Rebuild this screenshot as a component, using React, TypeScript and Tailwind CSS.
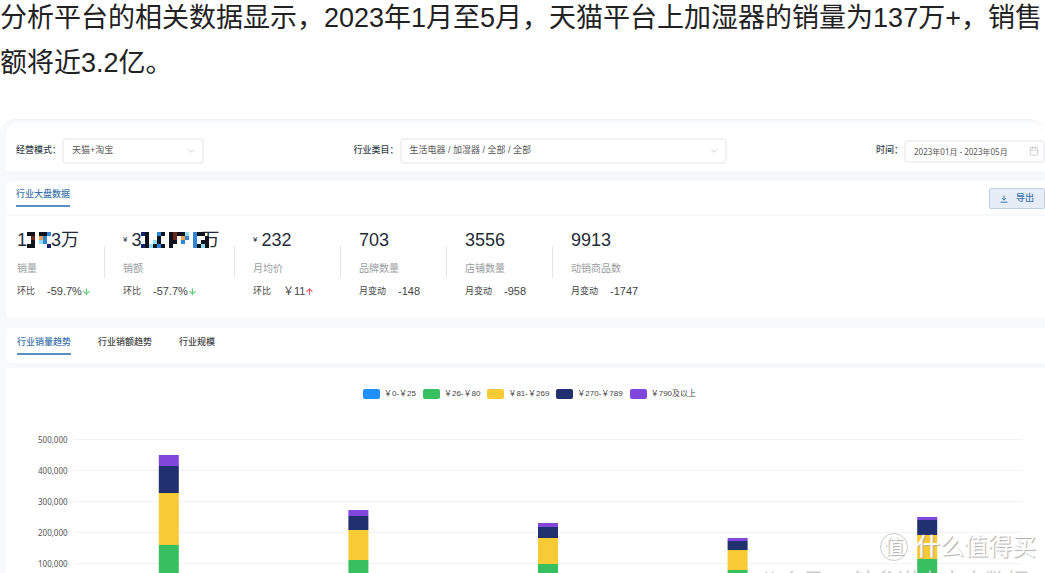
import { ArrowDown, ArrowUp, Calendar, ChevronDown } from "lucide-react";

const priceBands = [
    { label: "￥0-￥25", color: "#1e90ff" },
    { label: "￥26-￥80", color: "#38c060" },
    { label: "￥81-￥269", color: "#f8ca34" },
    { label: "￥270-￥789", color: "#21316f" },
    { label: "￥790及以上", color: "#8146dc" },
];

// cumulative sales per month in thousands: green, yellow, navy, purple
const months = [
    [158, 326, 413, 448],
    [110, 206, 252, 271],
    [97, 181, 216, 229],
    [77, 142, 171, 181],
    [113, 190, 239, 247],
];

const ticks = [500, 400, 300, 200, 100];
const ROW = 31;

const cellColors: Record<string, string> = {
    k: "#10131c",
    n: "#15206b",
    b: "#2f86d6",
    c: "#8fdcf7",
    m: "#6b2a1c",
    o: "#f0a04a",
};

function Mosaic({ rows, className }: { rows: string[]; className?: string }) {
    const cols = rows[0].length;
    return (
        <svg width={cols * 4} height={rows.length * 4} className={className} aria-hidden="true">
            {rows.map((row, y) =>
                row.split("").map((cell, x) =>
                    cell === "." ? null : <rect key={`${x}-${y}`} x={x * 4} y={y * 4} width="4" height="4" fill={cellColors[cell]} />
                )
            )}
        </svg>
    );
}

interface StatProps {
    label: string;
    compare: string;
    change: string;
    trend?: "up" | "down";
    wide?: boolean;
    last?: boolean;
    children: React.ReactNode;
}

function Stat({ label, compare, change, trend, wide, last, children }: StatProps) {
    return (
        <div className="flex">
            <div className={wide ? "w-[111px]" : "w-[87px]"}>
                <div className="flex items-center h-6 text-lg leading-6 whitespace-nowrap text-[#1f2c38]">{children}</div>
                <div className="mt-[7px] text-[10px] leading-5 text-[#9a9da1]">{label}</div>
                <div className="mt-1 flex items-center text-[9px] leading-4 whitespace-nowrap text-[#444]">
                    <span className="mr-3">{compare}</span>
                    <span className="text-[11px]">{change}</span>
                    {trend === "down" && <ArrowDown size={9} strokeWidth={3} className="text-[#5fcf7c]" />}
                    {trend === "up" && <ArrowUp size={9} strokeWidth={3} className="text-[#f0606c]" />}
                </div>
            </div>
            {!last && <div className="w-px h-8 mt-[18px] mr-[18px] bg-[#e4e5e7]" />}
        </div>
    );
}

function SelectField({ id, label, value, width }: { id: string; label: string; value: string; width: string }) {
    return (
        <div className="flex items-center">
            <label htmlFor={id} className="mr-1 w-[42px] whitespace-nowrap font-medium text-[#333f4a]">{label}</label>
            <div className={`relative ${width}`}>
                <select id={id} className="appearance-none w-full h-[26px] pl-2 pr-6 border-2 border-[#f0f1f4] rounded-sm bg-white text-[#555]">
                    <option>{value}</option>
                </select>
                <ChevronDown size={10} strokeWidth={2} className="absolute right-2 top-2 text-[#c4c7cd] pointer-events-none" />
            </div>
        </div>
    );
}

function Chart() {
    return (
        <section className="flex-1 bg-white pt-5">
            <ul className="flex justify-center gap-[7px] pl-2 text-[8px] leading-3 text-[#444]">
                {priceBands.map((band) => (
                    <li key={band.label} className="flex items-center gap-1 whitespace-nowrap">
                        <span className="w-[17px] h-[10px] rounded-[2px]" style={{ backgroundColor: band.color }} />
                        {band.label}
                    </li>
                ))}
            </ul>
            <div className="flex mt-6 pl-8 pr-[23px]">
                <div className="w-9 shrink-0 text-[8px] text-[#555] font-['Noto_Sans',sans-serif]">
                    {ticks.map((t) => (
                        <div key={t} className="h-[31px] leading-[31px]">{`${t},000`}</div>
                    ))}
                </div>
                <svg className="flex-1 h-[186px]" role="img" aria-label="行业销量趋势">
                    {ticks.map((t, i) => (
                        <line key={t} x1="0" x2="100%" y1={i * ROW + 15.5} y2={i * ROW + 15.5} stroke="#f3f3f5" />
                    ))}
                    {months.map((values, m) => (
                        <svg key={m} x={`${m * 20 + 10}%`} overflow="visible">
                            {values.map((v, i) => {
                                const bottom = Math.round(170 - ((i ? values[i - 1] : 0) * ROW) / 100);
                                const top = Math.round(170 - (v * ROW) / 100);
                                return <rect key={i} x="-10" width="20" y={top} height={bottom - top} fill={priceBands[i + 1].color} />;
                            })}
                        </svg>
                    ))}
                </svg>
            </div>
        </section>
    );
}

function App() {
    return (
        <div className="relative flex flex-col h-screen overflow-hidden bg-white font-['Liberation_Sans','Noto_Sans_CJK_SC',sans-serif]">
            <p className="-mt-1 mb-[33px] text-[27px] leading-[45px] text-[#222]">
                分析平台的相关数据显示，2023年1月至5月，天猫平台上加湿器的销量为137万+，销售额将近3.2亿。
            </p>

            <main className="flex flex-col flex-1 pl-[6px] pt-[3px] rounded-t-2xl bg-[#f7f9fb] border-t border-[#f0f1f3]">
                <form className="flex items-center justify-between h-12 pl-[10px] pt-3 pb-1 rounded-t-xl bg-white text-[9px]">
                    <SelectField id="mode" label="经营模式：" value="天猫+淘宝" width="w-[142px]" />
                    <SelectField id="category" label="行业类目：" value="生活电器 / 加湿器 / 全部 / 全部" width="w-[327px]" />
                    <div className="flex items-center">
                        <label htmlFor="period" className="mr-1 w-6 whitespace-nowrap font-medium text-[#333f4a]">时间：</label>
                        <div className="relative w-[141px]">
                            <input id="period" readOnly value="2023年01月 - 2023年05月" className="w-full h-[23px] pl-2 border-2 border-[#f0f1f4] rounded-sm text-[8px] text-[#555] font-['Noto_Sans','Noto_Sans_CJK_SC',sans-serif]" />
                            <Calendar size={10} strokeWidth={2} className="absolute right-[6px] top-[6px] text-[#c4c7cd]" />
                        </div>
                    </div>
                </form>

                <section className="mt-[10px] bg-white rounded-l-md">
                    <div className="flex justify-between items-start h-[35px] pl-[10px] border-b-2 border-[#f7f8fa]">
                        <h2 className="mt-1 h-[22px] text-[9px] leading-[19px] font-medium text-[#3d75ab] border-b-2 border-[#5a8fc4]">行业大盘数据</h2>
                        <button type="button" className="flex items-center justify-center gap-2 mt-[7px] w-14 h-[21px] border border-[#bfd0e4] rounded-[2px] bg-[#e6edf6] text-[9px] font-medium text-[#3d75ab]">
                            <svg width="8" height="8" viewBox="0 0 8 8" fill="none" stroke="currentColor" aria-hidden="true">
                                <path d="M4 0.5V5M2 3.2L4 5.2L6 3.2M0.5 7.2H7.5" />
                            </svg>
                            导出
                        </button>
                    </div>
                    <div className="flex h-[102px] pl-[11px] pt-3">
                        <Stat label="销量" compare="环比" change="-59.7%" trend="down">
                            <span>1</span>
                            <Mosaic rows={["kk.kkb", ".m.ob.", ".k.cb.", "kk...n"]} />
                            <span>3万</span>
                        </Stat>
                        <Stat label="销额" compare="环比" change="-57.7%" trend="down" wide>
                            <span className="text-[8px] mr-1">¥</span>
                            <span>3</span>
                            <Mosaic className="relative -mr-2" rows={["nk..bk.kmkkc.bkk.", ".k..k..km.ob.b..k", ".k.ck..kk.b..b.kk", "nkckbk.k.....bkck"]} />
                            <span>万</span>
                        </Stat>
                        <Stat label="月均价" compare="环比" change="￥11" trend="up">
                            <span className="text-[8px] mr-1">¥</span>
                            <span>232</span>
                        </Stat>
                        <Stat label="品牌数量" compare="月变动" change="-148">703</Stat>
                        <Stat label="店铺数量" compare="月变动" change="-958">3556</Stat>
                        <Stat label="动销商品数" compare="月变动" change="-1747" last>9913</Stat>
                    </div>
                </section>

                <nav className="flex items-start gap-[27px] h-[35px] mt-[10px] mb-[5px] pl-[11px] pt-1 rounded-l-md bg-white text-[9px] leading-[19px] font-medium text-[#444]">
                    <button type="button" className="h-[23px] text-[#3d75ab] border-b-2 border-[#5a8fc4]">行业销量趋势</button>
                    <button type="button" className="h-[23px] border-b-2 border-transparent">行业销额趋势</button>
                    <button type="button" className="h-[23px] border-b-2 border-transparent">行业规模</button>
                </nav>

                <Chart />
            </main>

            <div className="absolute right-[9px] bottom-3 flex items-center gap-2 text-2xl leading-7 text-white [text-shadow:1px_1px_1px_#aaa]">
                <span className="flex items-center justify-center size-7 rounded-full border border-[#ccc] text-xl">值</span>
                <span>什么值得买</span>
            </div>
            <div className="absolute right-4 -bottom-[21px] text-[22px] leading-6 whitespace-nowrap text-[#ccc]">公众号 @鲸参谋电商大数据</div>
        </div>
    );
}

export default App;
